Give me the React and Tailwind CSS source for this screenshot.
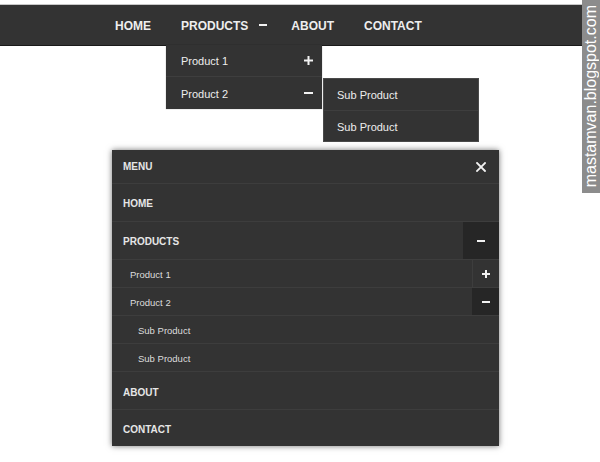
import React from "react";

const Plus = ({ size = 9, stroke = 2 }) => (
  <svg width={size} height={size} viewBox={`0 0 ${size} ${size}`} className="block">
    <rect x="0" y={(size - stroke) / 2} width={size} height={stroke} fill="#f2f2f2" />
    <rect x={(size - stroke) / 2} y="0" width={stroke} height={size} fill="#f2f2f2" />
  </svg>
);

const Minus = ({ size = 8, stroke = 2 }) => (
  <svg width={size} height={stroke} viewBox={`0 0 ${size} ${stroke}`} className="block">
    <rect x="0" y="0" width={size} height={stroke} fill="#f2f2f2" />
  </svg>
);

const Close = () => (
  <svg width="10" height="10" viewBox="0 0 10 10" className="block">
    <path d="M1 1 L9 9 M9 1 L1 9" stroke="#f2f2f2" strokeWidth="1.8" strokeLinecap="square" />
  </svg>
);

export default function App() {
  const font = { fontFamily: '"Liberation Sans", Arial, sans-serif' };
  return (
    <div className="relative w-[600px] h-[462px] bg-white overflow-hidden" style={font}>
      {/* top bar */}
      <div className="mt-[4px] border-t border-[#c8c8c8] bg-[#333333] h-[42px] border-b border-b-[#1a1a1a]">
        <ul className="flex h-full pl-[100px] text-[12px] font-bold text-[#eeeeee]">
          <li className="flex items-center px-[15px] pt-[2px]">HOME</li>
          <li className="relative flex items-center pl-[15px] pr-[9px]">
            <span className="pt-[2px]">PRODUCTS</span>
            <span className="ml-[11px]"><Minus size={8} /></span>
            {/* dropdown */}
            <div className="absolute left-0 top-full w-[156px] bg-[#333333] font-normal text-[11px] text-[#eeeeee] shadow-[0_0_1px_rgba(0,0,0,0.4)]">
              <div className="h-[32px] flex items-center justify-between pl-[15px] pr-[9px] border-b border-[#3e3e3e]">
                <span className="pt-[2px]">Product 1</span>
                <Plus size={9} />
              </div>
              <div className="relative h-[32px] flex items-center justify-between pl-[15px] pr-[9px]">
                <span className="pt-[2px]">Product 2</span>
                <Minus size={9} />
                <div className="absolute left-full top-[1px] ml-[1px] w-[156px] bg-[#333333] border border-[#4a4a4a]">
                  <div className="h-[32px] flex items-center pl-[13px] pt-[2px] border-b border-[#3e3e3e]">Sub Product</div>
                  <div className="h-[30px] flex items-center pl-[13px] pt-[2px]">Sub Product</div>
                </div>
              </div>
            </div>
          </li>
          <li className="flex items-center px-[15px] pt-[2px]">ABOUT</li>
          <li className="flex items-center px-[15px] pt-[2px]">CONTACT</li>
        </ul>
      </div>

      {/* mobile menu */}
      <div className="mt-[104px] ml-[112px] w-[387px] bg-[#333333] shadow-[0_0_6px_rgba(0,0,0,0.55)] text-[#e6e6e6]">
        <div className="h-[34px] flex items-center justify-between pl-[11px] border-b border-[#3d3d3d] text-[10px] font-bold">
          <span>MENU</span>
          <span className="w-[36px] flex justify-center"><Close /></span>
        </div>
        <div className="h-[38px] flex items-center pl-[11px] pt-[2px] border-b border-[#3d3d3d] text-[10px] font-bold">HOME</div>
        <div className="h-[38px] flex items-stretch justify-between border-b border-[#3d3d3d] text-[10px] font-bold">
          <span className="flex items-center pl-[11px] pt-[2px]">PRODUCTS</span>
          <span className="w-[36px] bg-[#262626] flex items-center justify-center"><Minus size={8} /></span>
        </div>
        <div className="h-[28px] flex items-stretch justify-between border-b border-[#3d3d3d] text-[9.5px] text-[#dddddd]">
          <span className="flex items-center pl-[18px] pt-[3px]">Product 1</span>
          <span className="w-[27px] border-l border-[#3d3d3d] flex items-center justify-center"><Plus size={8} /></span>
        </div>
        <div className="h-[28px] flex items-stretch justify-between border-b border-[#3d3d3d] text-[9.5px] text-[#dddddd]">
          <span className="flex items-center pl-[18px] pt-[3px]">Product 2</span>
          <span className="w-[27px] bg-[#262626] flex items-center justify-center"><Minus size={8} /></span>
        </div>
        <div className="h-[28px] flex items-center pl-[26px] pt-[3px] border-b border-[#3d3d3d] text-[9.5px] text-[#dddddd]">Sub Product</div>
        <div className="h-[28px] flex items-center pl-[26px] pt-[3px] border-b border-[#3d3d3d] text-[9.5px] text-[#dddddd]">Sub Product</div>
        <div className="h-[38px] flex items-center pl-[11px] pt-[3px] border-b border-[#3d3d3d] text-[10px] font-bold">ABOUT</div>
        <div className="h-[36px] flex items-center pl-[11px] pt-[3px] text-[10px] font-bold">CONTACT</div>
      </div>

      {/* watermark */}
      <div className="absolute right-0 top-0 w-[18px] h-[193px] bg-[#8c8c8c] flex items-center justify-center">
        <span className="[writing-mode:vertical-rl] rotate-180 text-[16px] leading-none text-white whitespace-nowrap">
          mastamvan.blogspot.com
        </span>
      </div>
    </div>
  );
}
